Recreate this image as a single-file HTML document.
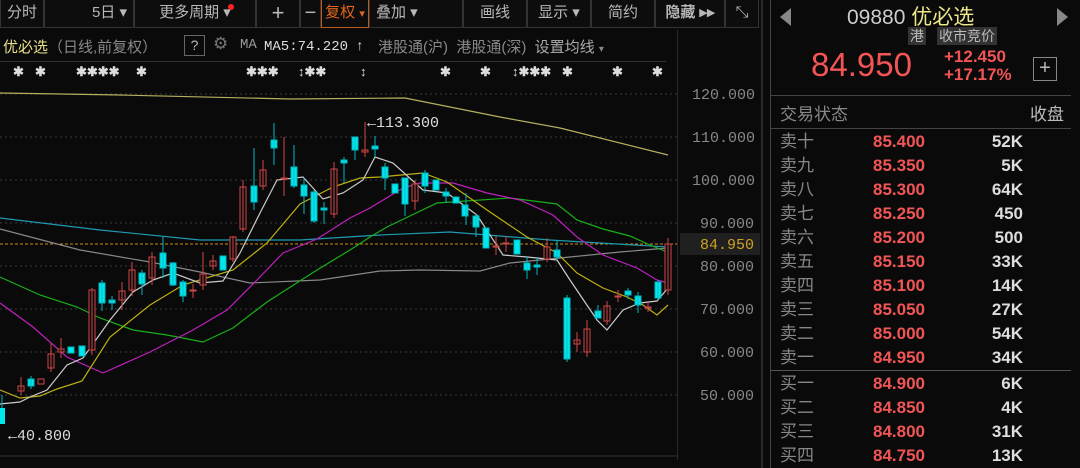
<!DOCTYPE html>
<html><head><meta charset="utf-8"><style>
*{margin:0;padding:0;box-sizing:border-box}
body{width:1080px;height:468px;background:#0a0a0a;overflow:hidden;position:relative;font-family:"Liberation Sans","Noto Sans CJK SC",sans-serif;color:#aaa}
.a{position:absolute;white-space:nowrap}
.btn{position:absolute;top:0;height:28px;border:1px solid #333;border-top:none;font-size:15px;color:#b8b8b8;text-align:center;line-height:26px;background:#0d0d0d}
.mono{font-family:"Liberation Mono","Noto Sans CJK SC",monospace}
.row{position:absolute;left:771px;width:300px;height:24px;font-size:17px;line-height:24px}
.row span{position:absolute;top:0}
.row .l{left:9px;color:#888}
.row .p{left:102px;color:#f25555;font-weight:bold}
.row .v{right:48px;color:#ddd;font-weight:bold}
.st{position:absolute;top:64px;font-size:13px;color:#ddd;font-weight:bold}
</style></head><body>
<!-- toolbar -->
<div class="btn" style="left:0;width:44px">分时</div>
<div class="btn" style="left:44px;width:90px;text-align:right;padding-right:6px">5日 ▾</div>
<div class="btn" style="left:134px;width:122px">更多周期 ▾<span style="position:absolute;left:93px;top:4px;width:6px;height:6px;border-radius:3px;background:#f22"></span></div>
<div class="btn" style="left:256px;width:44px;font-size:22px">+</div>
<div class="btn" style="left:300px;width:21px;font-size:20px">−</div>
<div class="btn" style="left:321px;width:48px;color:#e2661a;border:1px solid #c05a1a;border-top:none">复权 <span style="font-size:11px">▾</span></div>
<div class="btn" style="left:369px;width:94px;text-align:left;padding-left:6px">叠加 ▾</div>
<div class="btn" style="left:463px;width:64px">画线</div>
<div class="btn" style="left:527px;width:64px">显示 ▾</div>
<div class="btn" style="left:591px;width:64px">简约</div>
<div class="btn" style="left:655px;width:70px;font-weight:bold">隐藏 ▸▸</div>
<div class="btn" style="left:725px;width:34px;font-size:16px">⤡</div>
<!-- right panel lines -->
<div class="a" style="left:761px;top:0;width:2px;height:468px;background:#2a2a2a"></div>
<div class="a" style="left:770px;top:0;width:1px;height:468px;background:#444"></div>
<div class="a" style="left:677px;top:30px;width:1px;height:430px;background:#2a2a2a"></div>
<!-- info row -->
<div class="a" style="left:3px;top:36px;font-size:15px"><span style="color:#e8e08a">优必选</span><span style="color:#888">（日线,前复权）</span></div>
<div class="a" style="left:184px;top:35px;width:21px;height:21px;border:1px solid #666;color:#bbb;font-size:14px;text-align:center;line-height:19px">?</div>
<div class="a" style="left:213px;top:34px;font-size:17px;color:#777">⚙</div>
<div class="a mono" style="left:240px;top:37px;font-size:14px;color:#999">MA</div>
<div class="a mono" style="left:264px;top:37px;font-size:14px;color:#ddd">MA5:74.220 <span style="font-family:'Liberation Sans'">↑</span></div>
<div class="a" style="left:378px;top:36px;font-size:15px;color:#888">港股通(沪)&nbsp;&nbsp;港股通(深)&nbsp;&nbsp;<span style="color:#aaa">设置均线</span> <span style="font-size:10px">▾</span></div>
<div class="a" style="left:0;top:61px;width:666px;height:1px;background:#333"></div>
<div class="st" style="left:13px">✱</div><div class="st" style="left:35px">✱</div>
<div class="st" style="left:76px">✱✱✱✱</div>
<div class="st" style="left:136px">✱</div>
<div class="st" style="left:246px">✱✱✱</div>
<div class="st" style="left:298px">↕✱✱</div>
<div class="st" style="left:360px">↕</div>
<div class="st" style="left:440px">✱</div>
<div class="st" style="left:480px">✱</div>
<div class="st" style="left:512px">↕✱✱✱</div>
<div class="st" style="left:562px">✱</div>
<div class="st" style="left:612px">✱</div>
<div class="st" style="left:652px">✱</div>
<!-- chart -->
<svg class="a" style="left:0;top:0" width="770" height="468">
<g stroke="#3a3a3a" stroke-dasharray="2,3" stroke-width="1">
<line x1="0" y1="94" x2="677" y2="94"/><line x1="0" y1="137" x2="677" y2="137"/><line x1="0" y1="180" x2="677" y2="180"/><line x1="0" y1="223" x2="677" y2="223"/><line x1="0" y1="266" x2="677" y2="266"/><line x1="0" y1="309" x2="677" y2="309"/><line x1="0" y1="352" x2="677" y2="352"/><line x1="0" y1="395" x2="677" y2="395"/>
</g>
<line x1="0" y1="244" x2="677" y2="244" stroke="#d08a10" stroke-dasharray="3,2"/>
<line x1="0" y1="456" x2="677" y2="456" stroke="#333"/>
<g fill="none" stroke-width="1.2">
<polyline stroke="#b6b060" points="0,93 120,95 290,99 405,98 500,117 560,128 668,155"/>
<polyline stroke="#1e9bb0" points="0,218 100,230 200,240 300,240 380,235 450,232 550,240 668,247"/>
<polyline stroke="#888" points="0,229 80,250 150,262 200,272 250,283 320,280 380,271 420,270 480,271 510,263 560,258 620,252 668,248"/>
<polyline stroke="#18b018" points="0,277 40,295 77,307 100,318 133,330 167,335 203,342 233,328 267,302 317,270 350,250 370,237 387,227 437,203 510,198 557,204 577,220 603,229 630,236 650,245 667,252"/>
<polyline stroke="#c020c0" points="0,303 33,327 67,357 103,373 150,352 193,330 227,310 257,280 283,253 317,239 350,218 370,208 403,188 420,183 453,183 487,193 520,200 553,215 577,237 603,255 637,268 657,280 668,283"/>
<polyline stroke="#c0b010" points="0,390 20,398 40,396 57,389 82,381 110,337 150,305 183,285 233,270 267,243 300,204 333,187 360,178 380,177 423,173 447,182 487,210 527,237 557,253 577,273 603,288 627,297 643,305 657,315 668,305"/>
<polyline stroke="#ccc" points="0,404 20,402 30,397 47,390 67,365 83,358 110,320 133,292 153,280 173,273 200,283 223,281 240,253 260,213 277,180 303,177 323,199 343,193 363,180 375,157 393,163 423,190 447,193 477,215 503,255 527,257 557,260 570,280 597,320 607,330 623,310 640,303 657,301 668,288"/>
</g>
<g stroke-width="1">
<g stroke="#d04848" fill="#0a0a0a">
<rect x="18" y="386" width="6" height="5"/><rect x="38" y="379" width="6" height="5"/><rect x="48" y="354" width="6" height="14"/><rect x="58" y="349" width="6" height="3"/><rect x="89" y="290" width="6" height="60"/><rect x="119" y="291" width="6" height="9"/><rect x="129" y="270" width="6" height="20"/><rect x="149" y="257" width="6" height="21"/><rect x="190" y="290" width="6" height="1"/><rect x="200" y="274" width="6" height="11"/><rect x="210" y="261" width="6" height="5"/><rect x="230" y="237" width="6" height="22"/><rect x="240" y="187" width="6" height="42"/><rect x="260" y="170" width="6" height="16"/><rect x="281" y="178" width="6" height="1"/><rect x="331" y="169" width="6" height="45"/><rect x="362" y="150" width="6" height="2"/><rect x="412" y="184" width="6" height="17"/><rect x="493" y="246" width="6" height="1"/><rect x="503" y="243" width="6" height="1"/><rect x="544" y="247" width="6" height="12"/><rect x="574" y="340" width="6" height="4"/><rect x="584" y="329" width="6" height="23"/><rect x="604" y="306" width="6" height="15"/><rect x="615" y="296" width="6" height="1"/><rect x="645" y="307" width="6" height="1"/><rect x="665" y="244" width="6" height="46"/>
<path d="M21 377V395M51 343V372M61 338V358M92 288V355M122 282V310M132 262V296M152 252V285M193 284V298M203 252V290M213 255V270M233 236V262M243 180V232M263 160V190M284 137V196M334 162V218M365 122V157M415 180V210M496 236V255M506 236V252M547 238V262M577 332V352M587 320V357M607 301V325M618 290V302M648 302V312M668 238V295" fill="none"/>
</g>
<g fill="#00e8ee" stroke="#00b8c0">
<rect x="28" y="379" width="6" height="7"/><rect x="68" y="347" width="6" height="6"/><rect x="79" y="346" width="6" height="10"/><rect x="99" y="283" width="6" height="20"/><rect x="109" y="300" width="6" height="3"/><rect x="139" y="273" width="6" height="11"/><rect x="160" y="253" width="6" height="15"/><rect x="170" y="263" width="6" height="22"/><rect x="180" y="282" width="6" height="14"/><rect x="220" y="256" width="6" height="14"/><rect x="251" y="186" width="6" height="16"/><rect x="271" y="140" width="6" height="8"/><rect x="291" y="167" width="6" height="19"/><rect x="301" y="185" width="6" height="11"/><rect x="311" y="192" width="6" height="29"/><rect x="321" y="208" width="6" height="2"/><rect x="341" y="160" width="6" height="3"/><rect x="352" y="137" width="6" height="13"/><rect x="372" y="146" width="6" height="3"/><rect x="382" y="167" width="6" height="11"/><rect x="392" y="184" width="6" height="9"/><rect x="402" y="178" width="6" height="26"/><rect x="422" y="173" width="6" height="13"/><rect x="433" y="180" width="6" height="10"/><rect x="443" y="192" width="6" height="4"/><rect x="453" y="197" width="6" height="6"/><rect x="462" y="205" width="6" height="11"/><rect x="473" y="216" width="6" height="11"/><rect x="483" y="228" width="6" height="20"/><rect x="514" y="240" width="6" height="14"/><rect x="524" y="263" width="6" height="7"/><rect x="534" y="265" width="6" height="2"/><rect x="554" y="250" width="6" height="7"/><rect x="564" y="298" width="6" height="61"/><rect x="595" y="311" width="6" height="7"/><rect x="625" y="291" width="6" height="4"/><rect x="635" y="296" width="6" height="9"/><rect x="655" y="282" width="6" height="16"/>
<path d="M31 376V389M102 280V311M112 296V310M142 270V295M163 237V278M173 262V286M183 280V302M254 148V210M274 123V165M294 145V188M304 178V214M314 190V223M324 202V224M344 157V183M355 137V160M375 136V157M385 163V190M405 178V216M425 170V193M446 188V203M466 193V225M476 214V237M527 256V279M537 257V275M557 240V260M567 295V362M598 305V318M628 288V299M638 292V313M658 280V300M2 395V424" fill="none"/>
</g>
<rect x="0" y="408" width="5" height="16" fill="#00e8ee"/>
</g>
<text x="8" y="440" fill="#ddd" font-family="Liberation Mono" font-size="15">←40.800</text>
<text x="367" y="127" fill="#ddd" font-family="Liberation Mono" font-size="15">←113.300</text>
<g fill="#888" font-family="Liberation Mono" font-size="15">
<text x="692" y="99">120.000</text><text x="692" y="142">110.000</text><text x="692" y="185">100.000</text><text x="700" y="228">90.000</text><text x="700" y="271">80.000</text><text x="700" y="314">70.000</text><text x="700" y="357">60.000</text><text x="700" y="400">50.000</text>
</g>
<rect x="680" y="233" width="80" height="22" fill="#202020"/>
<text x="700" y="249" fill="#d0a020" font-family="Liberation Mono" font-size="15">84.950</text>
</svg>
<!-- right panel header -->
<div class="a" style="left:780px;top:8px;width:0;height:0;border-top:9px solid transparent;border-bottom:9px solid transparent;border-right:11px solid #888"></div>
<div class="a" style="left:1057px;top:8px;width:0;height:0;border-top:9px solid transparent;border-bottom:9px solid transparent;border-left:11px solid #888"></div>
<div class="a" style="left:847px;top:1px;font-size:21px;color:#ccc">09880 <span style="color:#ece88a">优必选</span></div>
<div class="a" style="left:908px;top:27px;font-size:14px;color:#bbb;background:#333;padding:0 2px;line-height:18px">港</div>
<div class="a" style="left:937px;top:27px;font-size:14px;color:#bbb;background:#333;padding:0 2px;line-height:18px">收市竞价</div>
<div class="a" style="left:811px;top:46px;font-size:33px;color:#f25555">84.950</div>
<div class="a" style="left:944px;top:48px;font-size:17px;color:#f25555;font-weight:bold;line-height:18px">+12.450<br>+17.17%</div>
<div class="a" style="left:1033px;top:57px;width:24px;height:24px;border:1px solid #888;color:#bbb;font-size:20px;text-align:center;line-height:21px">+</div>
<div class="a" style="left:771px;top:95px;width:300px;height:1px;background:#444"></div>
<div class="a" style="left:780px;top:100px;font-size:17px;color:#888">交易状态</div>
<div class="a" style="left:1030px;top:100px;font-size:17px;color:#bbb">收盘</div>
<div class="a" style="left:771px;top:128px;width:300px;height:1px;background:#444"></div>
<div class="a" style="left:771px;top:370px;width:300px;height:1px;background:#555"></div>
<div class="row" style="top:130px"><span class="l">卖十</span><span class="p">85.400</span><span class="v">52K</span></div>
<div class="row" style="top:154px"><span class="l">卖九</span><span class="p">85.350</span><span class="v">5K</span></div>
<div class="row" style="top:178px"><span class="l">卖八</span><span class="p">85.300</span><span class="v">64K</span></div>
<div class="row" style="top:202px"><span class="l">卖七</span><span class="p">85.250</span><span class="v">450</span></div>
<div class="row" style="top:226px"><span class="l">卖六</span><span class="p">85.200</span><span class="v">500</span></div>
<div class="row" style="top:250px"><span class="l">卖五</span><span class="p">85.150</span><span class="v">33K</span></div>
<div class="row" style="top:274px"><span class="l">卖四</span><span class="p">85.100</span><span class="v">14K</span></div>
<div class="row" style="top:298px"><span class="l">卖三</span><span class="p">85.050</span><span class="v">27K</span></div>
<div class="row" style="top:322px"><span class="l">卖二</span><span class="p">85.000</span><span class="v">54K</span></div>
<div class="row" style="top:346px"><span class="l">卖一</span><span class="p">84.950</span><span class="v">34K</span></div>
<div class="row" style="top:372px"><span class="l">买一</span><span class="p">84.900</span><span class="v">6K</span></div>
<div class="row" style="top:396px"><span class="l">买二</span><span class="p">84.850</span><span class="v">4K</span></div>
<div class="row" style="top:420px"><span class="l">买三</span><span class="p">84.800</span><span class="v">31K</span></div>
<div class="row" style="top:444px"><span class="l">买四</span><span class="p">84.750</span><span class="v">13K</span></div>
</body></html>
